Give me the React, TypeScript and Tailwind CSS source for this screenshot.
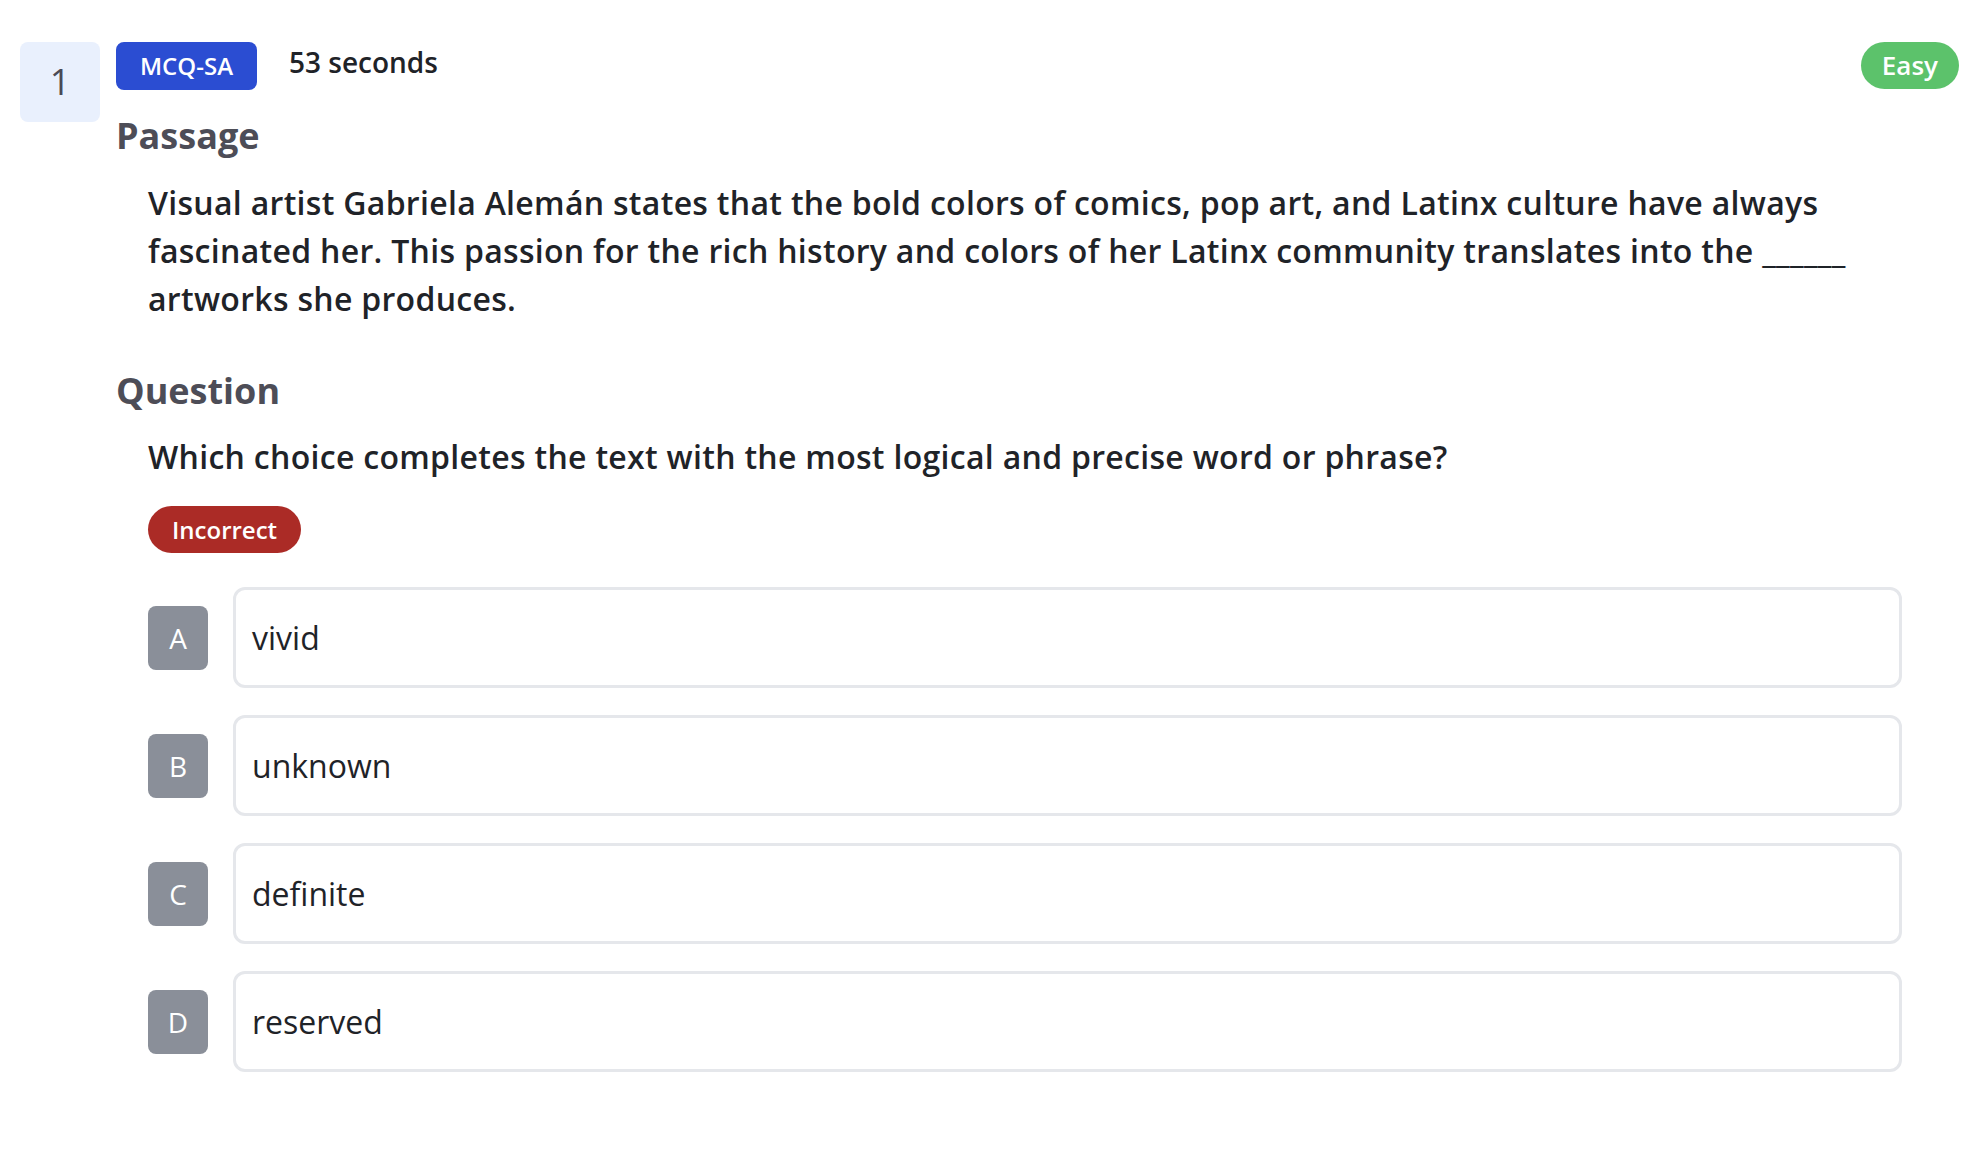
import React from 'react';

const options = [
  { letter: 'A', text: 'vivid' },
  { letter: 'B', text: 'unknown' },
  { letter: 'C', text: 'definite' },
  { letter: 'D', text: 'reserved' },
];

export default function App() {
  return (
    <div className="min-h-screen bg-white font-['Open_Sans',sans-serif] text-[#1f2328]">
      <div className="flex gap-4 pl-5 pr-[25px] pt-[42px]">
        {/* Question number */}
        <div className="flex h-20 w-20 shrink-0 items-center justify-center rounded-lg bg-[#e9f0fd] text-[36px] text-[#4a4a55]">
          1
        </div>

        <div className="flex-1">
          {/* Header row */}
          <div className="flex items-start justify-between">
            <div className="flex items-start gap-8">
              <span className="flex h-12 items-center rounded-lg bg-[#2b4dd2] px-[24px] text-[24px] font-semibold text-white">
                MCQ-SA
              </span>
              <span className="text-[28px] font-semibold leading-[40px] text-[#1f2328]">53 seconds</span>
            </div>
            <span className="flex h-[47px] items-center rounded-full bg-[#5cc26b] px-[21px] text-[26px] font-semibold text-white">
              Easy
            </span>
          </div>

          {/* Passage */}
          <h2 className="mt-[22px] text-[36px] font-bold leading-[48px] text-[#4d4d57]">Passage</h2>
          <p className="mt-[19px] pl-8 pr-[57px] text-[32px] font-semibold leading-[48px] tracking-[0.3px]">
            Visual artist Gabriela Alemán states that the bold colors of comics, pop art, and Latinx culture have always
            fascinated her. This passion for the rich history and colors of her Latinx community translates into the ______
            artworks she produces.
          </p>

          {/* Question */}
          <h2 className="mt-[44px] text-[36px] font-bold leading-[48px] text-[#4d4d57]">Question</h2>
          <div className="pl-8 pr-[57px]">
            <p className="mt-[18px] text-[32px] font-semibold leading-[48px] tracking-[0.3px]">
              Which choice completes the text with the most logical and precise word or phrase?
            </p>
            <span className="mt-[25px] inline-flex h-[47px] items-center rounded-full bg-[#ab2b26] px-[24px] text-[24px] font-semibold text-white">
              Incorrect
            </span>

            {/* Options */}
            <div className="mt-[34px] flex flex-col gap-[27px]">
              {options.map((o) => (
                <div key={o.letter} className="flex items-center gap-[25px]">
                  <div className="flex h-16 w-[60px] shrink-0 items-center justify-center rounded-lg bg-[#8a8f99] text-[28px] font-medium text-white">
                    {o.letter}
                  </div>
                  <div className="flex h-[101px] flex-1 items-center rounded-xl border-[3px] border-[#e5e7eb] px-4 text-[32px]">
                    {o.text}
                  </div>
                </div>
              ))}
            </div>
          </div>
        </div>
      </div>
    </div>
  );
}
